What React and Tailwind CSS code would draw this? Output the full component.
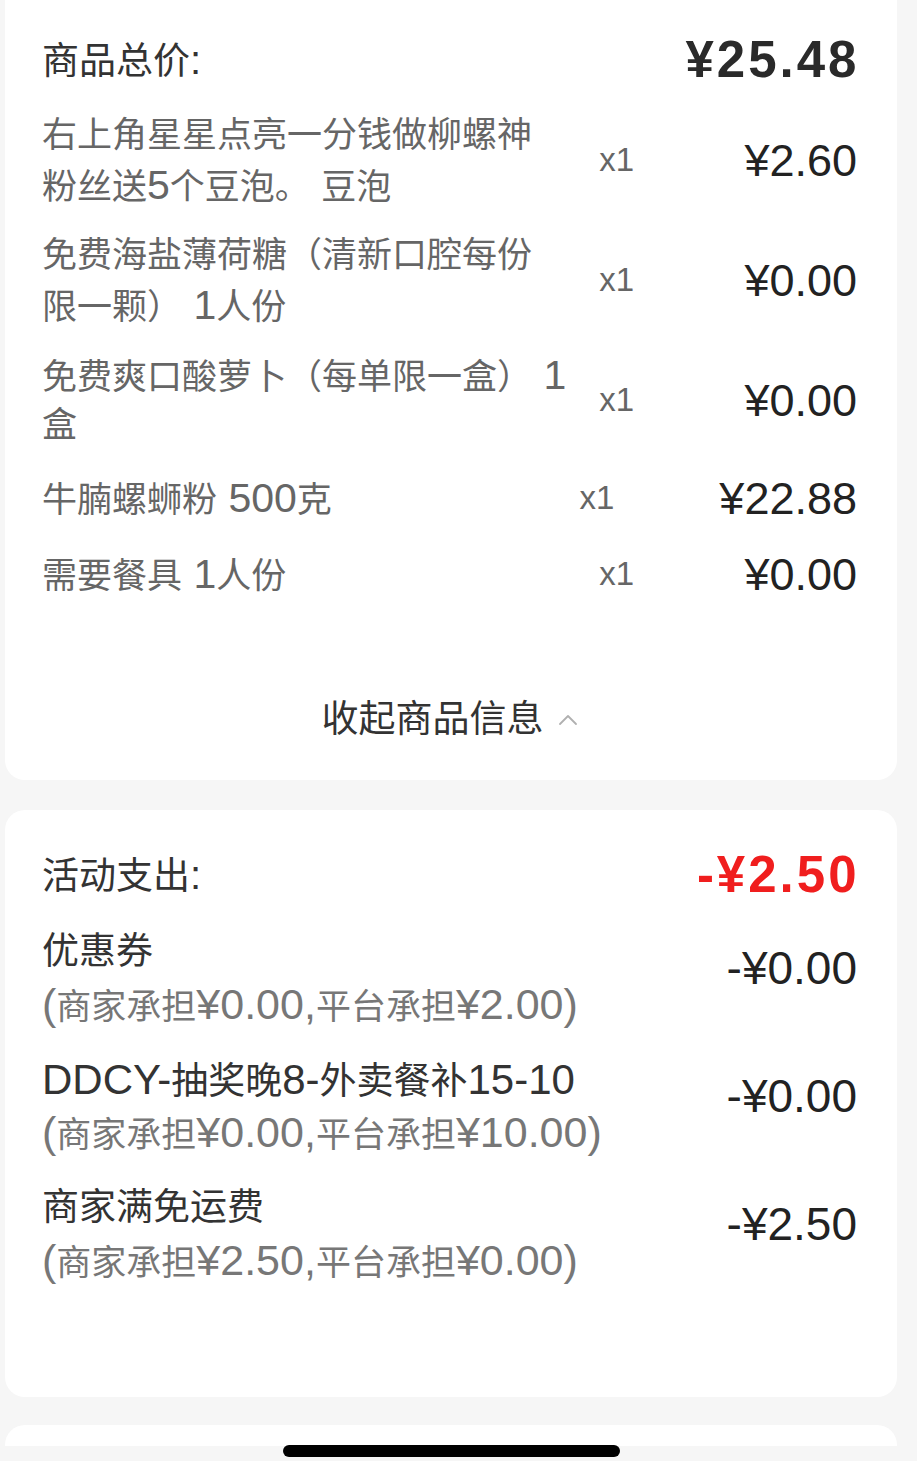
import React from 'react';

const ITEMS = [
  { lines: ['右上角星星点亮一分钱做柳螺神', '粉丝送5个豆泡。 豆泡'], qty: 'x1', price: '¥2.60' },
  { lines: ['免费海盐薄荷糖（清新口腔每份', '限一颗） 1人份'], qty: 'x1', price: '¥0.00' },
  { lines: ['免费爽口酸萝卜（每单限一盒） 1', '盒'], qty: 'x1', price: '¥0.00' },
  { lines: ['牛腩螺蛳粉 500克'], qty: 'x1', price: '¥22.88' },
  { lines: ['需要餐具 1人份'], qty: 'x1', price: '¥0.00' },
];

const DISCOUNTS = [
  { name: '优惠券', detail: '(商家承担¥0.00,平台承担¥2.00)', amount: '-¥0.00' },
  { name: 'DDCY-抽奖晚8-外卖餐补15-10', detail: '(商家承担¥0.00,平台承担¥10.00)', amount: '-¥0.00' },
  { name: '商家满免运费', detail: '(商家承担¥2.50,平台承担¥0.00)', amount: '-¥2.50' },
];

// latin runs render a bit larger than the CJK runs, like the phone font does
function Mixed({ text, latin }) {
  return text
    .split(/([\u0000-\u00ff]+)/)
    .filter(Boolean)
    .map((part, i) =>
      /^[\u0000-\u00ff]+$/.test(part) ? (
        <span key={i} className={latin}>{part}</span>
      ) : (
        <span key={i}>{part}</span>
      )
    );
}

function ChevronUp() {
  return (
    <svg width="20" height="12" viewBox="0 0 20 12" className="ml-[14px]">
      <polyline points="2,10 10,2 18,10" fill="none" stroke="#b0b0b0" strokeWidth="1.8" strokeLinecap="round" strokeLinejoin="round" />
    </svg>
  );
}

export default function App() {
  return (
    <div className="relative h-[1461px] overflow-hidden bg-[#f6f6f6] pl-[5px] pr-[20px] font-['Liberation_Sans','Noto_Sans_CJK_SC',sans-serif]">
      <section className="rounded-b-[20px] bg-white pl-[37px] pr-[40px] pt-[30px] pb-[35px]">
        <div className="flex h-[60px] items-center justify-between">
          <div className="text-[37px] text-[#333]">
            商品总价<span className="text-[40px]">:</span>
          </div>
          <div className="-mr-[2.5px] text-[51px] font-bold tracking-[3px] text-[#2a2a2a]">¥25.48</div>
        </div>

        <ul className="mt-[20px] flex flex-col gap-[20px]">
          {ITEMS.map((item, i) => (
            <li key={i} className="flex min-h-[56px] items-center">
              <div className="flex-1 text-[35px] leading-[50px] text-[#666]">
                {item.lines.map((line, j) => (
                  <div key={j} className="h-[50px] whitespace-pre">
                    <Mixed text={line} latin="text-[41px]" />
                  </div>
                ))}
              </div>
              <span className="text-[33px] text-[#666]">{item.qty}</span>
              <span className="ml-[105px] min-w-[118px] text-right text-[45px] leading-none text-[#222]">{item.price}</span>
            </li>
          ))}
        </ul>

        <div className="mt-[93px] flex h-[50px] items-center justify-center">
          <span className="text-[37px] text-[#333]">收起商品信息</span>
          <ChevronUp />
        </div>
      </section>

      <section className="mt-[30px] rounded-[20px] bg-white pl-[37px] pr-[40px] pt-[35px] pb-[110px]">
        <div className="flex h-[60px] items-center justify-between">
          <div className="text-[37px] text-[#333]">
            活动支出<span className="text-[40px]">:</span>
          </div>
          <div className="-mr-[2.5px] text-[51px] font-bold tracking-[3px] text-[#f01e1e]">-¥2.50</div>
        </div>

        <ul className="mt-[20px] flex flex-col gap-[22px]">
          {DISCOUNTS.map((d, i) => (
            <li key={i} className="flex items-start justify-between">
              <div>
                <div className="h-[53px] text-[37px] leading-[53px] text-[#333]">
                  <Mixed text={d.name} latin="text-[42px]" />
                </div>
                <div className="h-[53px] text-[35px] leading-[53px] text-[#777]">
                  <Mixed text={d.detail} latin="text-[43px]" />
                </div>
              </div>
              <div className="mt-[17px] text-[46px] leading-[53px] text-[#222]">{d.amount}</div>
            </li>
          ))}
        </ul>
      </section>

      <section className="mt-[28px] h-[21px] rounded-t-[20px] bg-white" />

      <div className="absolute left-[283px] top-[1445px] h-[12px] w-[337px] rounded-full bg-black" />
    </div>
  );
}
